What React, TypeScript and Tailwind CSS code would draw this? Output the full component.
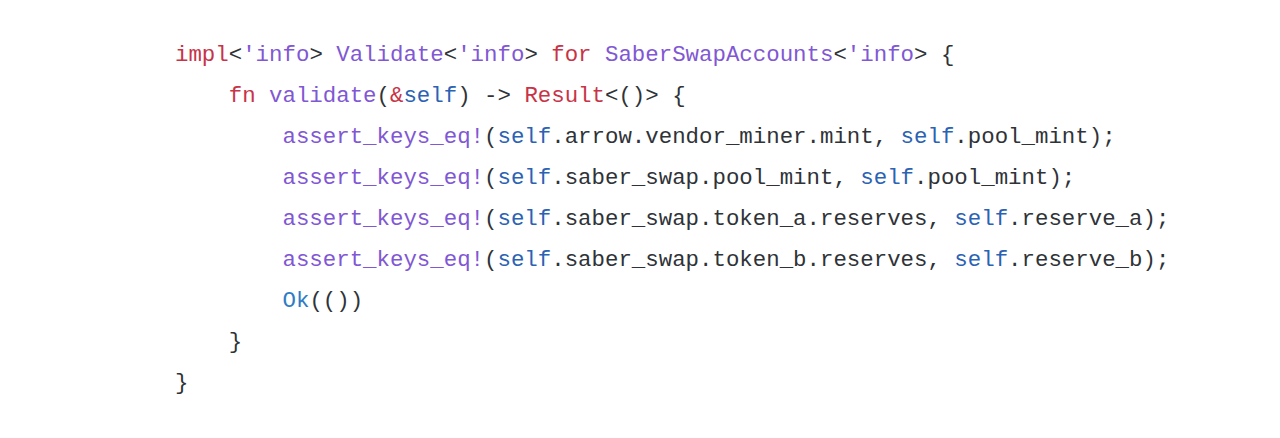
import React from 'react';

type Tok = [string, string?];

const R = 'text-[#c73447]';
const P = 'text-[#8057d4]';
const B = 'text-[#2b62b3]';
const K = 'text-[#2f7cc4]';

const lines: { indent: number; toks: Tok[] }[] = [
  {
    indent: 0,
    toks: [
      ['impl', R], ['<'], ["'info", P], ['> '], ['Validate', P], ['<'], ["'info", P], ['> '],
      ['for', R], [' '], ['SaberSwapAccounts', P], ['<'], ["'info", P], ['> {'],
    ],
  },
  {
    indent: 1,
    toks: [['fn', R], [' '], ['validate', P], ['('], ['&', R], ['self', B], [') -> '], ['Result', R], ['<()> {']],
  },
  {
    indent: 2,
    toks: [['assert_keys_eq!', P], ['('], ['self', B], ['.arrow.vendor_miner.mint, '], ['self', B], ['.pool_mint);']],
  },
  {
    indent: 2,
    toks: [['assert_keys_eq!', P], ['('], ['self', B], ['.saber_swap.pool_mint, '], ['self', B], ['.pool_mint);']],
  },
  {
    indent: 2,
    toks: [['assert_keys_eq!', P], ['('], ['self', B], ['.saber_swap.token_a.reserves, '], ['self', B], ['.reserve_a);']],
  },
  {
    indent: 2,
    toks: [['assert_keys_eq!', P], ['('], ['self', B], ['.saber_swap.token_b.reserves, '], ['self', B], ['.reserve_b);']],
  },
  { indent: 2, toks: [['Ok', K], ['(())']] },
  { indent: 1, toks: [['}']] },
  { indent: 0, toks: [['}']] },
];

export default function App() {
  return (
    <div className="w-[1280px] h-[438px] bg-white overflow-hidden">
      <pre
        className="pl-[175px] pt-[35px] text-[22.4px] leading-[41px] text-[#2f3338] whitespace-pre"
        style={{ fontFamily: '"Liberation Mono", "DejaVu Sans Mono", monospace' }}
      >
        {lines.map((l, i) => (
          <div key={i}>
            {'    '.repeat(l.indent)}
            {l.toks.map(([t, c], j) => (
              <span key={j} className={c}>
                {t}
              </span>
            ))}
          </div>
        ))}
      </pre>
    </div>
  );
}
